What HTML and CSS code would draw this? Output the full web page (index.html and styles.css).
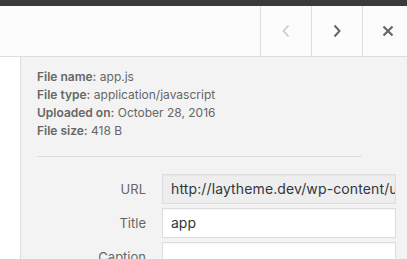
FILE: index.html
```html
<!DOCTYPE html>
<html>
<head>
<meta charset="utf-8">
<link rel="stylesheet" href="styles.css">
</head>
<body>
<div class="modal">
  <div class="topbar"></div>
  <div class="header">
    <div class="spacer"></div>
    <button class="navbtn prev" aria-label="Previous">
      <svg width="10" height="14" viewBox="0 0 10 14"><path d="M7.5 1.5 L2.5 7 L7.5 12.5" fill="none" stroke="#cccccc" stroke-width="1.8"/></svg>
    </button>
    <button class="navbtn next" aria-label="Next">
      <svg width="10" height="14" viewBox="0 0 10 14"><path d="M2.5 1.5 L7.5 7 L2.5 12.5" fill="none" stroke="#666666" stroke-width="2"/></svg>
    </button>
    <button class="navbtn close" aria-label="Close">
      <svg width="12" height="12" viewBox="0 0 12 12"><path d="M1.5 1.5 L10.5 10.5 M10.5 1.5 L1.5 10.5" fill="none" stroke="#666666" stroke-width="2.2"/></svg>
    </button>
  </div>
  <div class="content">
    <div class="leftcol"></div>
    <div class="details">
      <div class="info">
        <div class="line"><strong>File name:</strong> app.js</div>
        <div class="line"><strong>File type:</strong> application/javascript</div>
        <div class="line"><strong>Uploaded on:</strong> October 28, 2016</div>
        <div class="line"><strong>File size:</strong> 418 B</div>
      </div>
      <div class="fields">
        <div class="row">
          <span class="label">URL</span>
          <div class="input readonly">http://laytheme.dev/wp-content/uploads/2016/10/app.js</div>
        </div>
        <div class="row">
          <span class="label">Title</span>
          <div class="input">app</div>
        </div>
        <div class="row">
          <span class="label">Caption</span>
          <div class="input tall"></div>
        </div>
      </div>
    </div>
  </div>
</div>
</body>
</html>
```

FILE: styles.css
```css
html, body {
  margin: 0;
  padding: 0;
  overflow: hidden;
  width: 407px;
  height: 259px;
  background: #fcfcfc;
}
body {
  font-family: Inter, "Liberation Sans", sans-serif;
}
.modal {
  width: 413px;
  height: 259px;
  display: flex;
  flex-direction: column;
  overflow: hidden;
}
.topbar {
  height: 6px;
  background: #3b3b3b;
  flex: none;
}
.header {
  height: 50px;
  flex: none;
  display: flex;
  background: #fcfcfc;
  border-bottom: 1px solid #dddddd;
  box-shadow: 0 1px 1px rgba(0,0,0,0.03);
}
.spacer { flex: 1; }
.navbtn {
  width: 51px;
  height: 50px;
  border: 0;
  border-left: 1px solid #dddddd;
  background: transparent;
  padding: 0;
  margin: 0;
  display: flex;
  align-items: center;
  justify-content: center;
}
.content {
  flex: 1;
  display: flex;
  min-height: 0;
  overflow: hidden;
}
.leftcol {
  width: 20px;
  background: #ffffff;
  border-right: 1px solid #dddddd;
  flex: none;
}
.details {
  flex: 1;
  background: #f3f3f3;
  padding: 11px 0 0 16px;
}
.info {
  width: 325px;
  padding-bottom: 16px;
  border-bottom: 1px solid #dddddd;
  font-size: 12px;
  line-height: 18px;
  color: #666666;
}
.info strong {
  font-weight: 600;
}
.fields {
  padding-top: 17px;
}
.row {
  display: flex;
  align-items: flex-start;
  margin-bottom: 4px;
}
.label {
  width: 109px;
  flex: none;
  text-align: right;
  font-size: 13px;
  line-height: 30px;
  color: #666666;
}
.input {
  margin-left: 16px;
  width: 216px;
  height: 28px;
  line-height: 28px;
  padding: 0 8px;
  border: 1px solid #dddddd;
  background: #ffffff;
  font-size: 14px;
  color: #32373c;
  white-space: nowrap;
  overflow: hidden;
  box-shadow: inset 0 1px 2px rgba(0,0,0,0.04);
}
.input.readonly {
  background: #eeeeee;
  letter-spacing: 0.12px;
}
.input.tall {
  height: 60px;
}
```
